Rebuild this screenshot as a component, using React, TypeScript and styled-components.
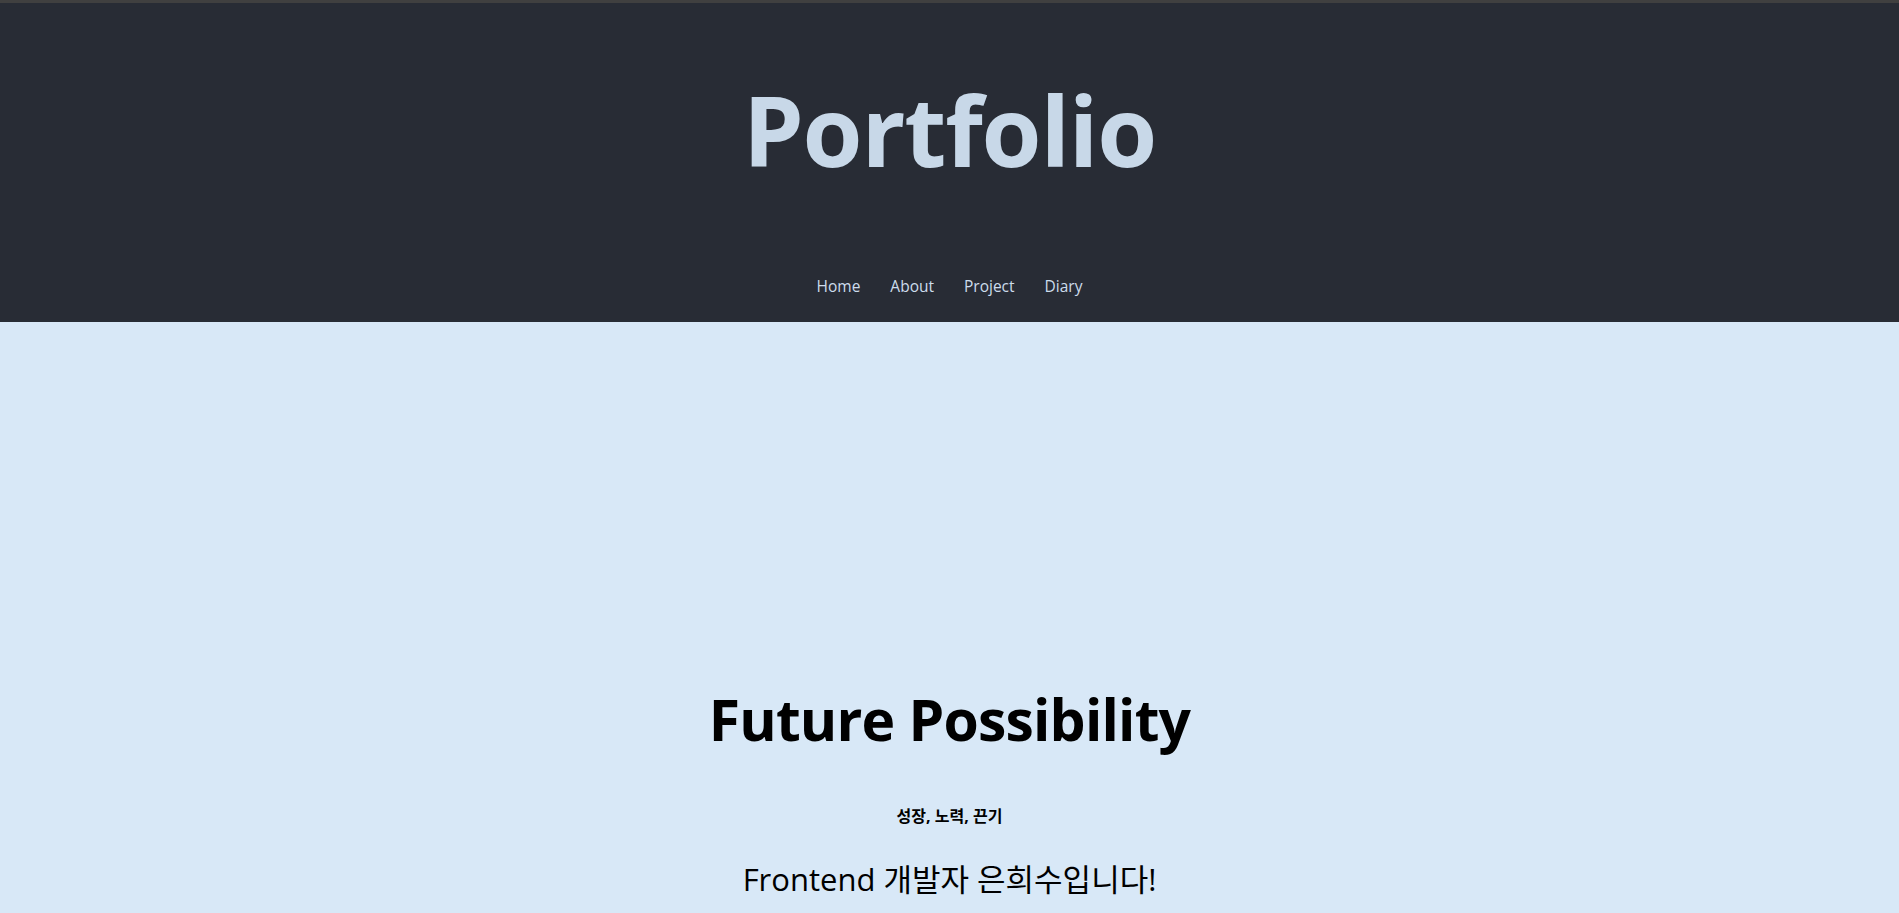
import React from "react"
import styled, { createGlobalStyle } from "styled-components"

const GlobalStyle = createGlobalStyle`
  html, body {
    margin: 0;
    padding: 0;
    background: #d8e8f7;
    font-family: "Open Sans", "Noto Sans CJK KR", sans-serif;
  }
`

const navItems = ["Home", "About", "Project", "Diary"]

const App = () => {
  return (
    <>
      <GlobalStyle />
      <Header>
        <Title>Portfolio</Title>
        <Nav>
          {navItems.map((item) => (
            <NavLink key={item} href="#">{item}</NavLink>
          ))}
        </Nav>
      </Header>
      <Hero>
        <HeroTitle>Future Possibility</HeroTitle>
        <Keywords>성장, 노력, 끈기</Keywords>
        <Intro>Frontend 개발자 은희수입니다!</Intro>
      </Hero>
    </>
  )
}

const Header = styled.header`
  background: #282c35;
  border-top: 3px solid #404040;
  height: 322px;
  box-sizing: border-box;
  display: flex;
  flex-direction: column;
  align-items: center;
`

const Title = styled.h1`
  margin: 78px 0 0;
  font-size: 97px;
  line-height: 1;
  font-weight: 700;
  color: #c8d8e8;
  letter-spacing: -1.2px;
`

const Nav = styled.nav`
  margin-top: 97px;
  display: flex;
  gap: 30px;
`

const NavLink = styled.a`
  color: #cddcec;
  text-decoration: none;
  font-size: 15.5px;
`

const Hero = styled.main`
  display: flex;
  flex-direction: column;
  align-items: center;
  padding-top: 363px;
  color: #000;
`

const HeroTitle = styled.h2`
  margin: 0;
  font-size: 57px;
  font-weight: 700;
  line-height: 1.2;
  letter-spacing: -0.8px;
`

const Keywords = styled.p`
  margin: 50px 0 0;
  font-size: 16px;
  font-weight: 700;
`

const Intro = styled.p`
  margin: 28px 0 0;
  font-size: 31px;
  font-weight: 400;
`

export default App
